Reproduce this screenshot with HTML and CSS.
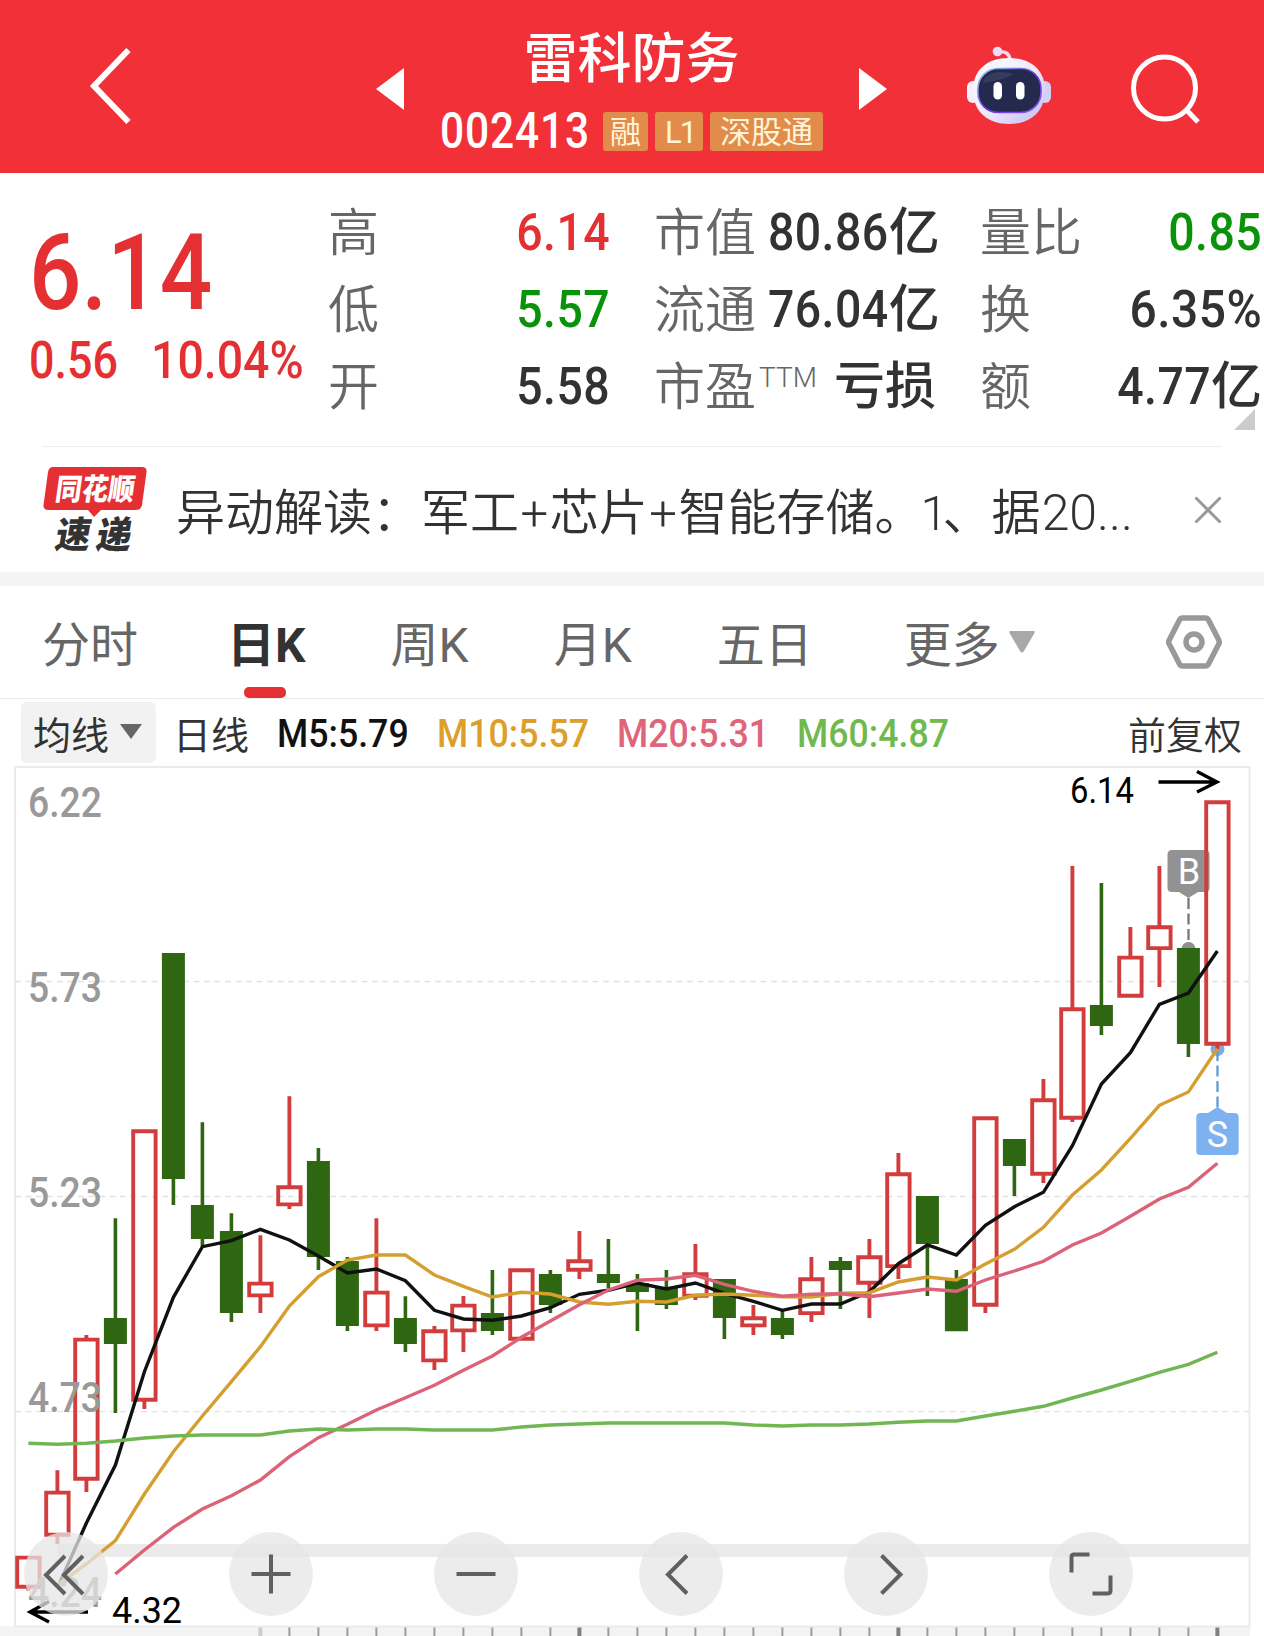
FILE: index.html
```html
<!DOCTYPE html>
<html lang="zh-CN">
<head>
<meta charset="UTF-8" />
<meta name="viewport" content="width=device-width, initial-scale=1.0" />
<title>雷科防务 002413</title>
<link rel="stylesheet" href="styles.css">
</head>
<body>
<div class="app">
    <header class="top-bar">
        <svg class="back" width="46" height="80" viewBox="0 0 46 80"><path d="M40.500 4 L6 40 L40.500 76" /></svg>
        <svg class="arrow prev" width="28" height="42" viewBox="0 0 28 42"><path d="M28 0 V42 L0 21 Z" /></svg>
        <div class="title">
            <div class="stock-name">雷科防务</div>
            <div class="stock-sub">
                <span class="code"><span class="num">002413</span></span>
                <span class="tag">融</span>
                <span class="tag">L1</span>
                <span class="tag">深股通</span>
            </div>
        </div>
        <svg class="arrow next" width="28" height="42" viewBox="0 0 28 42"><path d="M0 0 V42 L28 21 Z" /></svg>
        <svg class="robot" width="84" height="80" viewBox="0 0 84 80">
            <defs>
                <linearGradient id="head" x1="0" y1="0" x2="1" y2="1">
                    <stop offset="0" stop-color="#fff" />
                    <stop offset="0.5" stop-color="#efeafb" />
                    <stop offset="1" stop-color="#c3bbf3" />
                </linearGradient>
                <linearGradient id="rim" x1="0" y1="0" x2="1" y2="1">
                    <stop offset="0" stop-color="#8fdcf0" />
                    <stop offset="0.5" stop-color="#6b35d8" />
                    <stop offset="1" stop-color="#8a5cf0" />
                </linearGradient>
            </defs>
            <path d="M31 6 Q42 4 43 14" fill="none" stroke="#f3d9ea" stroke-width="3.500" />
            <circle cx="30.500" cy="5.500" r="4.800" fill="#e9dcf3" />
            <rect x="0" y="35" width="12" height="22" rx="6" fill="#f3effc" />
            <rect x="72" y="35" width="12" height="22" rx="6" fill="#d5cff8" />
            <path d="M42 12 C65 12 78 25 78 44 C78 66 63 78 42 78 C21 78 6 66 6 44 C6 25 19 12 42 12 Z" fill="url(#head)" />
            <rect x="11" y="22.500" width="63" height="44" rx="20" fill="#232a4d" stroke="url(#rim)" stroke-width="1.600" />
            <path d="M16 37 Q18 27 32 26 Q42 26 46 28 Q38 34 16 37 Z" fill="#474e6e" opacity="0.5" />
            <rect x="26.500" y="36" width="8.500" height="17.500" rx="4.250" fill="#fff" />
            <rect x="49" y="36" width="8.500" height="17.500" rx="4.250" fill="#fff" />
        </svg>
        <svg class="search" width="74" height="74" viewBox="0 0 74 74"><circle cx="34.500" cy="35" r="31" /><path d="M56.500 57 L68 69" /></svg>
    </header>

    <section class="quote">
        <div class="price">
            <div class="price-now"><span class="num">6.14</span></div>
            <div class="price-chg"><span class="num chg">0.56</span><span class="num pct">10.04%</span></div>
        </div>
        <div class="stats">
            <div class="stat"><span class="label">高</span><b class="num red">6.14</b></div>
            <div class="stat"><span class="label">低</span><b class="num green">5.57</b></div>
            <div class="stat"><span class="label">开</span><b class="num">5.58</b></div>
        </div>
        <div class="stats">
            <div class="stat"><span class="label">市值</span><b><i class="num">80.86</i>亿</b></div>
            <div class="stat"><span class="label">流通</span><b><i class="num">76.04</i>亿</b></div>
            <div class="stat"><span class="label">市盈<sup>TTM</sup></span><b>亏损</b></div>
        </div>
        <div class="stats">
            <div class="stat"><span class="label">量比</span><b class="num green">0.85</b></div>
            <div class="stat"><span class="label">换</span><b class="num rate">6.35%</b></div>
            <div class="stat"><span class="label">额</span><b><i class="num">4.77</i>亿</b></div>
        </div>
        <span class="corner"></span>
    </section>

    <section class="news">
        <svg class="news-logo" width="104" height="86" viewBox="0 0 104 86">
            <path d="M10 0 H99 Q104 0 103.500 5 L99 38 Q98 43 93 43 H58 L51 50 L45 43 H5 Q0 43 0.500 38 L5 5 Q6 0 10 0 Z" fill="#e53033" />
            <text x="10" y="33" transform="translate(6 0) skewX(-8)" textLength="79" lengthAdjust="spacingAndGlyphs" font-size="30" fill="#fff">同花顺</text>
            <text x="15" y="81" transform="translate(10 0) skewX(-10)" textLength="35" lengthAdjust="spacingAndGlyphs" font-size="37" fill="#333">速</text>
            <text x="56" y="81" transform="translate(10 0) skewX(-10)" textLength="35" lengthAdjust="spacingAndGlyphs" font-size="37" fill="#333">递</text>
        </svg>
        <p class="news-text">异动解读：军工<i>+</i>芯片<i>+</i>智能存储。<i class="one">1</i>、据<i class="end">20...</i></p>
        <svg class="close" width="28" height="28" viewBox="0 0 28 28"><path d="M1.500 1.500 L26.500 26.500 M26.500 1.500 L1.500 26.500" /></svg>
    </section>

    <nav class="tabs">
        <a class="tab">分时</a>
        <a class="tab active">日K</a>
        <a class="tab">周K</a>
        <a class="tab">月K</a>
        <a class="tab">五日</a>
        <a class="tab more">更多<svg width="26" height="22" viewBox="0 0 26 22"><path d="M1 0 H25 Q26 0 25.500 2 L15 20 Q13 23 11 20 L0.500 2 Q0 0 1 0 Z" /></svg></a>
        <svg class="setting" width="56" height="54" viewBox="0 0 56 54">
            <path d="M16.500 3 H39.500 Q41.500 3 42.500 5 L52.500 24.500 Q54 27 52.500 29.500 L42.500 49 Q41.500 51 39.500 51 H16.500 Q14.500 51 13.500 49 L3.500 29.500 Q2 27 3.500 24.500 L13.500 5 Q14.500 3 16.500 3 Z" />
            <circle cx="28" cy="27" r="8" />
        </svg>
    </nav>

    <div class="ma-bar">
        <div class="ma-select">均线<svg width="22" height="15" viewBox="0 0 22 15"><path d="M0 0 H22 L11 15 Z" /></svg></div>
        <span class="ma-name">日线</span>
        <span class="ma"><span class="num">M5:5.79</span></span>
        <span class="ma m10"><span class="num">M10:5.57</span></span>
        <span class="ma m20"><span class="num">M20:5.31</span></span>
        <span class="ma m60"><span class="num">M60:4.87</span></span>
        <span class="fq">前复权</span>
    </div>

    <section class="chart-wrap">
        <svg id="chart" width="1264" height="872" viewBox="0 764 1264 872"></svg>
        <div class="tools">
            <button class="tool"><svg viewBox="0 0 84 84"><path d="M41 24 L22 43 L41 62 M59 24 L40 43 L59 62" /></svg></button>
            <button class="tool"><svg viewBox="0 0 84 84"><path d="M42 22.500 V61.500 M22.500 42 H61.500" /></svg></button>
            <button class="tool"><svg viewBox="0 0 84 84"><path d="M22.500 42 H61.500" /></svg></button>
            <button class="tool"><svg viewBox="0 0 84 84"><path d="M48 23.500 L29 42.500 L48 61.500" /></svg></button>
            <button class="tool"><svg viewBox="0 0 84 84"><path d="M37.500 23.500 L56.500 42.500 L37.500 61.500" /></svg></button>
            <button class="tool"><svg viewBox="0 0 84 84"><path d="M22.500 40.500 V25 Q22.500 22.500 25 22.500 H40.500 M61.500 43.500 V58.500 Q61.500 61.500 58.500 61.500 H43.500" /></svg></button>
        </div>
    </section>
</div>
<script src="script.js"></script>
</body>
</html>
```
FILE: styles.css
```css
:root {
    --red: #e53033;
    --green: #0a920a;
    --text: #323232;
    --gray: #666;
}
* {
    box-sizing: border-box;
    margin: 0;
    padding: 0;
}
body {
    background: #fff;
    color: var(--text);
    font-family: Roboto, "Noto Sans CJK SC", sans-serif;
}
i, b {
    font-style: normal;
    font-weight: 500;
}
svg {
    display: block;
    flex: none;
}
.app {
    width: 1264px;
    height: 1636px;
    overflow: hidden;
}
/* narrow digits */
.num {
    display: inline-block;
    transform: scaleX(0.88);
    transform-origin: left center;
    font-weight: 500;
    white-space: nowrap;
}

/* header */
.top-bar {
    display: flex;
    align-items: flex-start;
    height: 173px;
    padding-left: 88px;
    background: #f13038;
    color: #fff;
}
.back {
    margin-top: 46px;
    fill: none;
    stroke: #fff;
    stroke-width: 6;
}
.arrow {
    margin-top: 68px;
    fill: #fff;
}
.prev {
    margin-left: 242px;
}
.title {
    width: 455px;
    padding-top: 24px;
}
.stock-name {
    height: 72px;
    line-height: 72px;
    font-size: 54px;
    font-weight: 500;
    text-align: center;
}
.stock-sub {
    display: flex;
    align-items: center;
    gap: 7px;
    height: 39px;
    margin-top: 16px;
    padding-left: 36px;
}
.code {
    width: 156px;
    font-size: 50px;
    line-height: 43px;
}
.code .num {
    letter-spacing: 1px;
    transform: scaleX(0.85);
}
.tag {
    height: 39px;
    padding: 0 7px;
    line-height: 41px;
    font-size: 31px;
    white-space: nowrap;
    color: #fff4d8;
    background: #e28c4b;
    border-radius: 3px;
}
.tag:nth-child(3) {
    padding: 0 10px;
    width: 48px;
    letter-spacing: -2px;
}
.tag:nth-child(4) {
    width: 113px;
    padding: 0 10px;
}
.robot {
    margin: 46px 0 0 80px;
}
.search {
    margin: 53px 0 0 79px;
    fill: none;
    stroke: #fff;
    stroke-width: 5;
}

/* quote */
.quote {
    position: relative;
    display: flex;
    height: 273px;
    padding-top: 21px;
}
.price {
    width: 328px;
    padding: 28px 0 0 29px;
    color: var(--red);
}
.price-now {
    height: 119px;
    line-height: 104px;
    font-size: 105px;
}
.price-chg {
    display: flex;
    height: 40px;
    line-height: 40px;
    font-size: 51px;
}
.chg {
    width: 122px;
}
.price-chg .pct {
    transform: scaleX(0.91);
}
.stats {
    width: 282px;
    margin-right: 44px;
    flex: none;
}
.stats:nth-child(4) {
    margin-right: 0;
}
.stat {
    display: flex;
    justify-content: space-between;
    height: 77px;
    line-height: 77px;
    font-size: 51px;
    white-space: nowrap;
}
.stat .num {
    letter-spacing: 0.5px;
    transform: scaleX(0.91);
    transform-origin: right center;
}
.stat .rate {
    transform: scaleX(0.94);
}
.label {
    line-height: 80px;
    color: var(--gray);
    font-weight: 350;
}
.label sup {
    margin-left: 3px;
    font-size: 28px;
    font-weight: 300;
    line-height: 0;
    vertical-align: 18px;
}
.red {
    color: var(--red);
}
.green {
    color: var(--green);
}
.corner {
    position: absolute;
    right: 9px;
    bottom: 16px;
    border-left: 21px solid transparent;
    border-bottom: 21px solid #ccc;
}

/* news */
.news {
    display: flex;
    height: 126px;
    margin: 0 42px;
    border-top: 1px solid #eee;
    padding-top: 20px;
}
.news-logo {
    margin-left: 1px;
    overflow: visible;
}
.news-logo text {
    font-weight: 900;
    font-family: "Noto Sans CJK SC", sans-serif;
}
.news-text {
    flex: 1;
    margin-left: 29px;
    height: 92px;
    line-height: 92px;
    font-size: 49px;
    font-weight: 350;
    white-space: nowrap;
}
.news-text i {
    font-weight: 350;
    padding: 0 1.500px;
}
.news-text .one {
    padding: 0;
    margin: 0 -5px 0 -3px;
}
.news-text .end {
    padding: 0 0 0 1px;
    font-size: 50px;
}
.close {
    margin-top: 29px;
    fill: none;
    stroke: #999;
    stroke-width: 3;
}

/* period tabs */
.tabs {
    display: flex;
    align-items: center;
    height: 127px;
    padding: 0 42px;
    border-top: 14px solid #f4f4f4;
    border-bottom: 1px solid #ebebeb;
}
.tab {
    position: relative;
    flex: none;
    margin-right: 85px;
    height: 112px;
    line-height: 120px;
    font-size: 48px;
    font-weight: 400;
    color: var(--gray);
}
.tab:first-child {
    margin-right: 89px;
}
.tab:nth-child(4) {
    margin-right: 85px;
}
.tab:nth-child(5) {
    margin-right: 91px;
}
.tab.active {
    color: var(--text);
    font-weight: 700;
}
.tab.active::after {
    content: "";
    position: absolute;
    left: 50%;
    bottom: 0;
    width: 42px;
    height: 11px;
    margin-left: -22px;
    border-radius: 5px;
    background: var(--red);
}
.tab.more {
    display: flex;
    align-items: flex-start;
    gap: 9px;
    margin-right: 0;
}
.more svg {
    fill: #a8a8a8;
    margin-top: 45px;
}
.setting {
    margin-left: auto;
    fill: none;
    stroke: #999;
    stroke-width: 5.500;
}

/* moving averages */
.ma-bar {
    display: flex;
    align-items: center;
    height: 65px;
    padding: 2px 22px 0 21px;
    font-size: 38px;
}
.ma-select {
    display: flex;
    align-items: center;
    gap: 11px;
    width: 135px;
    height: 61px;
    padding-left: 12px;
    border-radius: 6px;
    background: #f2f2f2;
}
.ma-select svg {
    fill: #666;
    margin-top: -3px;
}
.ma-name {
    width: 104px;
    margin-left: 17px;
}
.ma {
    width: 180px;
    padding-top: 2px;
    font-size: 39px;
    color: #111;
}
.ma .num {
    transform: scaleX(0.915);
}
.ma:nth-child(3) {
    width: 160px;
}
.ma.m10 {
    color: #dca02a;
}
.ma.m20 {
    color: #e0647a;
}
.ma.m60 {
    color: #70b94e;
}
.fq {
    margin-left: auto;
    font-weight: 350;
}

/* chart */
.chart-wrap {
    position: relative;
    height: 872px;
}
.grid {
    stroke: #e2e2e2;
    stroke-width: 1.300;
    stroke-dasharray: 6 4.500;
}
.up {
    fill: none;
    stroke: #d23c3c;
    stroke-width: 3.900;
}
.down {
    fill: #2f6612;
    stroke: none;
}
.line {
    fill: none;
    stroke-width: 3.400;
}
.axis {
    font-size: 42px;
    font-weight: 500;
    fill: #999;
}
.mark {
    font-size: 37px;
    fill: #000;
}
.pin {
    font-size: 36px;
    fill: #fff;
    text-anchor: middle;
}
.pointer {
    fill: none;
    stroke: #000;
    stroke-width: 3.300;
}
.tools {
    position: absolute;
    left: 24px;
    top: 768px;
    display: flex;
    gap: 121px;
}
.tool {
    width: 84px;
    height: 84px;
    border: 0;
    border-radius: 50%;
    background: rgba(230, 230, 230, 0.75);
}
.tool path {
    fill: none;
    stroke: #606060;
    stroke-width: 4;
}
```
FILE: script.js
```js
// [up?, high, body top, body bottom, low]
const candles = [
    [1, 1556, 1555.7, 1588.7, 1590.7],
    [1, 1470.3, 1490.7, 1536.7, 1544],
    [1, 1335, 1337.7, 1480.7, 1492],
    [0, 1218.3, 1318, 1344, 1413],
    [1, 1130, 1129.3, 1401.7, 1409],
    [0, 953, 953, 1179, 1205],
    [0, 1122.3, 1205, 1239, 1246],
    [0, 1213.3, 1231, 1313, 1322],
    [1, 1235.3, 1281.7, 1297.3, 1313],
    [1, 1096.3, 1185.3, 1206.3, 1209],
    [0, 1148, 1161, 1257, 1270],
    [0, 1257, 1261, 1326, 1331],
    [1, 1218.3, 1290.7, 1327.3, 1331],
    [0, 1296.3, 1318, 1344, 1352],
    [1, 1326, 1329.3, 1362.3, 1370],
    [1, 1296, 1303.7, 1332.3, 1352],
    [0, 1270, 1313, 1331, 1335],
    [1, 1269, 1268.3, 1340.7, 1340],
    [0, 1270, 1274, 1305, 1313],
    [1, 1231, 1259.3, 1271.7, 1279],
    [0, 1239, 1274, 1283, 1288],
    [0, 1274, 1283, 1292, 1331],
    [0, 1270, 1287, 1305, 1309],
    [1, 1244, 1272.3, 1297.7, 1300],
    [0, 1279, 1279, 1318, 1339],
    [1, 1305, 1316.3, 1327.3, 1335],
    [0, 1311, 1318, 1335, 1339],
    [1, 1257, 1277.3, 1315, 1322],
    [0, 1257, 1261, 1270, 1309],
    [1, 1239, 1255.3, 1284.7, 1318],
    [1, 1153, 1172.3, 1268, 1279],
    [0, 1196, 1196, 1244, 1296],
    [0, 1270, 1279, 1331.3, 1331],
    [1, 1117, 1116.3, 1306.7, 1313],
    [0, 1139, 1139, 1166, 1196],
    [1, 1079, 1098.3, 1175.7, 1183],
    [1, 866, 1007.3, 1119.7, 1122],
    [0, 883, 1005, 1026, 1035],
    [1, 927, 955.7, 997.7, 997],
    [1, 866, 925.3, 950, 987],
    [0, 948, 948, 1044, 1057],
    [1, 801, 800.3, 1045.7, 1049]
];

const ma5 = [1588, 1523, 1465, 1371.7, 1297.3, 1246.7, 1240.7, 1229.3, 1240, 1256, 1273, 1269, 1280.7, 1310.3, 1319, 1320.3, 1316, 1307.7, 1294.3, 1290.3, 1283, 1289, 1283, 1293.3, 1301.3, 1310.3, 1304, 1304, 1291.7, 1263.7, 1245, 1255, 1225.3, 1206.7, 1192.3, 1145.7, 1084, 1052.7, 1004.3, 993, 951];
const ma10 = [1585, 1564, 1540.7, 1494, 1451.7, 1416, 1381.7, 1346.7, 1306, 1276.7, 1260, 1255, 1255, 1275, 1286.3, 1297, 1292.3, 1294, 1302, 1304.3, 1301.3, 1302, 1295.3, 1294, 1295.3, 1296.7, 1297, 1293.3, 1292.7, 1282, 1277, 1280, 1264, 1249.3, 1227.3, 1195, 1170, 1138.3, 1105.3, 1092, 1048.7];
const ma20 = [1574, 1550, 1527.3, 1509, 1495.7, 1480, 1456.7, 1437.7, 1424.3, 1410, 1397.7, 1385.3, 1370.3, 1356, 1337.3, 1321, 1304.7, 1290, 1280.3, 1279, 1275.3, 1284.3, 1291.3, 1296.3, 1294.3, 1293.7, 1296.7, 1293, 1289, 1291.3, 1280, 1271, 1261.3, 1245, 1233, 1216.3, 1199, 1187.3, 1163.3];
const ma60 = [1443.3, 1444.3, 1443.3, 1441, 1438, 1436, 1435, 1435, 1435, 1431, 1429, 1430, 1429, 1429, 1430, 1430, 1430, 1427, 1425, 1424, 1423, 1423, 1423, 1423, 1423, 1425, 1426, 1425, 1425, 1424, 1422.3, 1421, 1421, 1416, 1411.3, 1406.3, 1398, 1390, 1381.3, 1372.3, 1364.3, 1352.3];

const STEP = 29;
const xAt = i => 28.4 + STEP * i;

function candle([up, high, top, bottom, low], i) {
    const x = xAt(i);
    if (!up) {
        return `<path class="down" d="M${x - 11.5} ${top} h23 V${bottom} h-23 Z M${x - 1.8} ${high} h3.600 V${low} h-3.600 Z" />`;
    }
    let d = `M${x - 11.2} ${top + 1.9} h22.400 V${bottom - 1.9} h-22.400 Z`;
    if (high < top) d += ` M${x} ${high} V${top + 1}`;
    if (low > bottom) d += ` M${x} ${bottom - 1} V${low}`;
    return `<path class="up" d="${d}" />`;
}

// every average ends on the last candle
function line(values, color) {
    const start = candles.length - values.length;
    const pts = values.map((y, i) => `${xAt(start + i)},${y}`).join(" ");
    return `<polyline class="line" points="${pts}" stroke="${color}" />`;
}

function axis(y, text) {
    return `<text class="axis" x="28" y="${y}" textLength="74" lengthAdjust="spacingAndGlyphs">${text}</text>`;
}

let out = "";

// frame, grid and pane divider
out += `<rect x="0" y="1626" width="1250" height="10" fill="#f3f3f3" />`;
out += `<rect x="15" y="767" width="1234.500" height="859.500" fill="#fff" stroke="#ebebeb" stroke-width="2" />`;
[981.5, 1196.5, 1411.6].forEach(y => {
    out += `<path class="grid" d="M15 ${y} H1249" />`;
});
out += `<rect x="57" y="1544" width="1193" height="13" fill="#ebebeb" />`;

for (let i = 8; i < 42; i++) {
    const major = i === 19 || i === 30 || i === 41;
    const w = major || i === 8 ? 4 : 2;
    const color = i === 8 ? "#ccc" : major ? "#808080" : "#9c9c9c";
    out += `<rect x="${xAt(i) - w / 2}" y="1627.500" width="${w}" height="9" fill="${color}" />`;
}

out += `<circle cx="1188.500" cy="949" r="7" fill="#8f8f8f" />`;
out += `<path d="M1188.500 898 V943" stroke="#777" stroke-width="2.300" stroke-dasharray="11 4.500" />`;
out += `<path d="M1172 850 H1205 Q1209.500 850 1209.500 854.500 V888 Q1209.500 892 1205 892 H1198 L1188.500 898 L1179 892 H1172 Q1167.500 892 1167.500 888 V854.500 Q1167.500 850 1172 850 Z" fill="#929292" />`;
out += `<text class="pin" x="1189" y="884">B</text>`;

// sell marker
out += `<circle cx="1217.500" cy="1049" r="7" fill="#82abdd" />`;
out += `<path d="M1217.500 1050 V1108" stroke="#5f9ad8" stroke-width="2.300" stroke-dasharray="11 4.500" />`;
out += `<path d="M1200.500 1113 H1208 L1217.500 1107 L1227 1113 H1234.500 Q1238.700 1113 1238.700 1117.500 V1151 Q1238.700 1155 1234.500 1155 H1200.500 Q1196.300 1155 1196.300 1151 V1117.500 Q1196.300 1113 1200.500 1113 Z" fill="#7eb1f0" />`;
out += `<text class="pin" x="1217.500" y="1147">S</text>`;

out += candles.map(candle).join("");
out += line(ma5, "#111");
out += line(ma10, "#d59f30");
out += line(ma20, "#dc6377");
out += line(ma60, "#72b654");

out += axis(817, "6.22") + axis(1001.7, "5.73") + axis(1207, "5.23") + axis(1412, "4.73") + axis(1607, "4.24");

out += `<text class="mark" x="1070" y="803" textLength="64" lengthAdjust="spacingAndGlyphs">6.14</text>`;
out += `<path class="pointer" d="M1158.500 782 H1217 M1197 771.500 L1217 782 L1197 792" />`;
out += `<text class="mark" x="112" y="1623" textLength="70" lengthAdjust="spacingAndGlyphs">4.32</text>`;
out += `<path class="pointer" d="M88 1612 H30 M49 1601.500 L30 1612 L49 1622" />`;

document.getElementById("chart").innerHTML = out;
```
